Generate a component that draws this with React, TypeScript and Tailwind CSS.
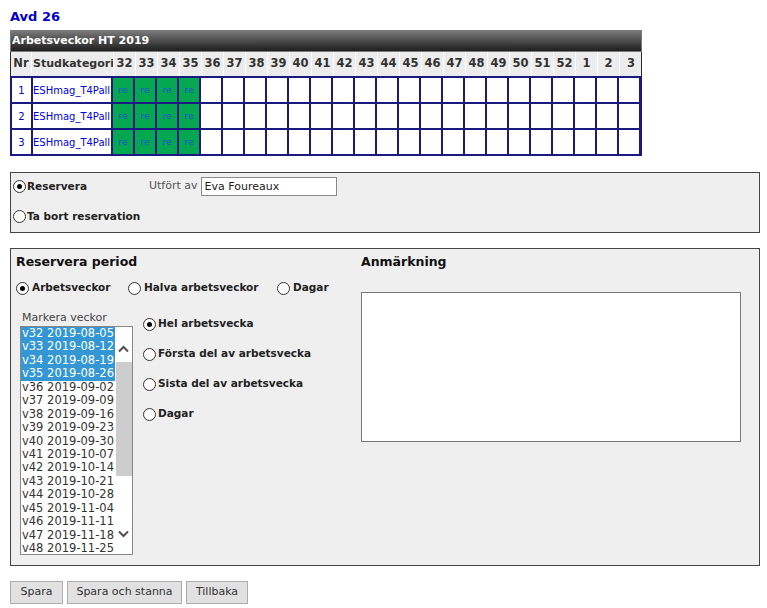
import React from 'react'

const weeks = [32, 33, 34, 35, 36, 37, 38, 39, 40, 41, 42, 43, 44, 45, 46, 47, 48, 49, 50, 51, 52, 1, 2, 3]
const reserved = [32, 33, 34, 35]

const listWeeks = [
  ['v32', '2019-08-05'],
  ['v33', '2019-08-12'],
  ['v34', '2019-08-19'],
  ['v35', '2019-08-26'],
  ['v36', '2019-09-02'],
  ['v37', '2019-09-09'],
  ['v38', '2019-09-16'],
  ['v39', '2019-09-23'],
  ['v40', '2019-09-30'],
  ['v41', '2019-10-07'],
  ['v42', '2019-10-14'],
  ['v43', '2019-10-21'],
  ['v44', '2019-10-28'],
  ['v45', '2019-11-04'],
  ['v46', '2019-11-11'],
  ['v47', '2019-11-18'],
  ['v48', '2019-11-25'],
]

function Radio({ checked = false }: { checked?: boolean }) {
  return (
    <span className="w-[13px] h-[13px] rounded-full border border-[#333] bg-white flex items-center justify-center shrink-0">
      {checked && <span className="w-[5px] h-[5px] rounded-full bg-black" />}
    </span>
  )
}

function RadioLabel({ checked, label, gap = 'ml-[1px]' }: { checked?: boolean; label: string; gap?: string }) {
  return (
    <label className="flex items-center">
      <Radio checked={checked} />
      <span className={`${gap} text-[10.5px] font-bold text-[#222]`}>{label}</span>
    </label>
  )
}

export default function App() {
  return (
    <div className="min-h-screen bg-white px-[10px] pt-[9px] font-['DejaVu_Sans',sans-serif] text-[#333]">
      <h1 className="h-[16px] leading-[16px] text-[13px] font-bold text-[#0000cc]">Avd 26</h1>

      {/* Week grid */}
      <div className="mt-[5px] w-[632px]">
        <div className="h-[22px] border border-[#7a7a7a] bg-gradient-to-b from-[#7a7a7a] via-[#4b4b4b] to-[#1f1f1f] flex items-center pl-[1px]">
          <span className="text-[11px] font-bold text-white">Arbetsveckor HT 2019</span>
        </div>
        <div className="grid grid-cols-[21px_82px_repeat(24,22px)] h-[24px] bg-[#ececec] border-x border-[#2a2a2a]">
          <div className="flex items-center justify-center text-[11.5px] font-bold border-r border-white overflow-hidden">Nr</div>
          <div className="flex items-center pl-[1px] text-[11px] font-bold border-r border-white overflow-hidden whitespace-nowrap">Studkategori</div>
          {weeks.map((w, i) => (
            <div
              key={w}
              className={`flex items-center justify-center text-[11.5px] font-bold ${i < weeks.length - 1 ? 'border-r border-white' : ''}`}
            >
              {w}
            </div>
          ))}
        </div>
        <div className="border-2 border-t-0 border-[#1a1a80] bg-[#1a1a80]">
          <div className="grid grid-cols-[19px_78px_repeat(24,20px)] gap-[2px] pt-[2px]">
            {[1, 2, 3].map((r) => (
              <React.Fragment key={r}>
                <div className="h-[24px] bg-white flex items-center justify-center text-[10px] text-[#0000cc]">{r}</div>
                <div className="h-[24px] bg-white flex items-center text-[10px] text-[#0000dd] overflow-hidden whitespace-nowrap">
                  ESHmag_T4Pall
                </div>
                {weeks.map((w) => (
                  <div
                    key={w}
                    className={`h-[24px] flex items-center justify-center text-[9.5px] text-[#1f4fd6] ${reserved.includes(w) ? 'bg-[#05a750]' : 'bg-white'}`}
                  >
                    {reserved.includes(w) ? 're' : ''}
                  </div>
                ))}
              </React.Fragment>
            ))}
          </div>
        </div>
      </div>

      {/* Reservera / Ta bort */}
      <div className="mt-[16px] w-[750px] h-[61px] border border-[#444] bg-[#efefef] pl-[2px] pt-[4px]">
        <div className="flex items-center h-[19px]">
          <div className="w-[136px]">
            <RadioLabel checked label="Reservera" />
          </div>
          <span className="text-[11px] text-[#555]">Utfört av</span>
          <input
            defaultValue="Eva Foureaux"
            className="ml-[3px] w-[136px] h-[19px] border border-[#8a8a8a] bg-white px-[3px] text-[11px] text-[#222] outline-none"
          />
        </div>
        <div className="flex items-center h-[19px] mt-[11px]">
          <RadioLabel label="Ta bort reservation" />
        </div>
      </div>

      {/* Reservera period */}
      <div className="mt-[15px] w-[750px] h-[318px] border border-[#444] bg-[#efefef] flex">
        <div className="w-[350px] pl-[5px] pt-[5px]">
          <div className="h-[16px] leading-[16px] text-[12.5px] font-bold text-[#111]">Reservera period</div>
          <div className="mt-[10px] h-[16px] flex items-center">
            <div className="w-[112px]">
              <RadioLabel checked label="Arbetsveckor" gap="ml-[3px]" />
            </div>
            <div className="w-[149px]">
              <RadioLabel label="Halva arbetsveckor" gap="ml-[3px]" />
            </div>
            <RadioLabel label="Dagar" gap="ml-[3px]" />
          </div>
          <div className="flex mt-[15px] pl-[4px]">
            <div>
              <div className="h-[14px] leading-[14px] pl-[2px] text-[11px] text-[#444]">Markera veckor</div>
              <div className="mt-[1px] w-[113px] h-[229px] border border-[#888] bg-white flex overflow-hidden">
                <div className="w-[94px]">
                  {listWeeks.map(([v, d], i) => (
                    <div
                      key={v}
                      className={`h-[13.45px] leading-[13.45px] pl-[1px] text-[11.5px] whitespace-nowrap ${i < 4 ? 'bg-[#3497d4] text-white' : 'text-[#333]'}`}
                    >
                      {v} {d}
                    </div>
                  ))}
                </div>
                <div className="w-[17px] relative">
                  <svg className="absolute left-[3px] top-[18px]" width="11" height="8" viewBox="0 0 11 8">
                    <path d="M1 6.5 L5.5 2 L10 6.5" fill="none" stroke="#505050" strokeWidth="2" />
                  </svg>
                  <div className="absolute left-[1px] top-[35px] w-[16px] h-[114px] bg-[#cdcdcd]" />
                  <svg className="absolute left-[3px] top-[203px]" width="11" height="8" viewBox="0 0 11 8">
                    <path d="M1 1.5 L5.5 6 L10 1.5" fill="none" stroke="#505050" strokeWidth="2" />
                  </svg>
                </div>
              </div>
            </div>
            <div className="ml-[10px] pt-[5px] flex flex-col gap-[14px]">
              <div className="h-[16px] flex items-center">
                <RadioLabel checked label="Hel arbetsvecka" gap="ml-[2px]" />
              </div>
              <div className="h-[16px] flex items-center">
                <RadioLabel label="Första del av arbetsvecka" gap="ml-[2px]" />
              </div>
              <div className="h-[16px] flex items-center">
                <RadioLabel label="Sista del av arbetsvecka" gap="ml-[2px]" />
              </div>
              <div className="h-[16px] flex items-center">
                <RadioLabel label="Dagar" gap="ml-[2px]" />
              </div>
            </div>
          </div>
        </div>
        <div className="pt-[5px]">
          <div className="h-[16px] leading-[16px] text-[12.5px] font-bold text-[#111]">Anmärkning</div>
          <textarea className="mt-[22px] block w-[380px] h-[150px] border border-[#777] bg-white resize-none outline-none" />
        </div>
      </div>

      {/* Buttons */}
      <div className="mt-[15px] flex gap-[4px]">
        <button className="h-[23px] w-[53px] border border-[#adadad] bg-[#e1e1e1] text-[11px] text-[#333]">Spara</button>
        <button className="h-[23px] w-[115px] border border-[#adadad] bg-[#e1e1e1] text-[11px] text-[#333]">Spara och stanna</button>
        <button className="h-[23px] w-[62px] border border-[#adadad] bg-[#e1e1e1] text-[11px] text-[#333]">Tillbaka</button>
      </div>
    </div>
  )
}
